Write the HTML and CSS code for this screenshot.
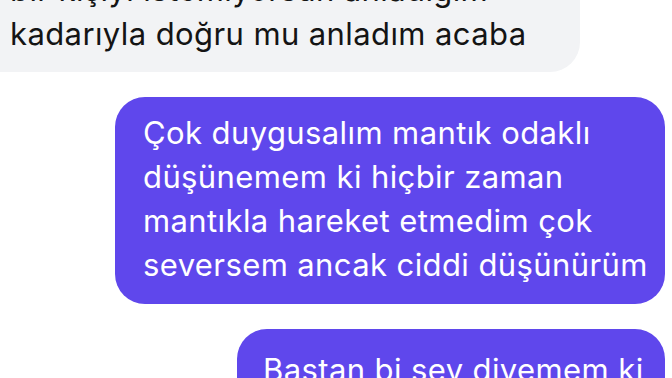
FILE: index.html
```html
<!DOCTYPE html>
<html lang="tr">
<head>
    <meta charset="UTF-8">
    <meta name="viewport" content="width=device-width, initial-scale=1.0">
    <title>Mesajlar</title>
    <link rel="stylesheet" href="styles.css">
</head>
<body>
    <div class="chat">
        <div class="bubble incoming">
            bir kişiyi istemiyorsun anladığım<br>
            kadarıyla doğru mu anladım acaba
        </div>
        <div class="bubble outgoing first">
            Çok duygusalım mantık odaklı<br>
            düşünemem ki hiçbir zaman<br>
            mantıkla hareket etmedim çok<br>
            seversem ancak ciddi düşünürüm
        </div>
        <div class="bubble outgoing second">
            Bastan bi sey diyemem ki<br>
            ilk önce tanımam lazım
        </div>
    </div>
</body>
</html>
```

FILE: styles.css
```css
body {
    margin: 0;
    background-color: #ffffff;
    font-family: Inter, Roboto, sans-serif;
    overflow: hidden;
}

.chat {
    display: flex;
    flex-direction: column;
    gap: 25px;
    margin-top: -32px;
    padding-right: 7px;
}

.bubble {
    box-sizing: border-box;
    font-size: 31px;
    letter-spacing: 0.4px;
    line-height: 44px;
    white-space: nowrap;
}

.incoming {
    align-self: flex-start;
    width: 580px;
    padding: 0 14px 16px 10px;
    background-color: #f2f3f5;
    color: #141414;
    border-radius: 0 0 30px 0;
}

.outgoing {
    align-self: flex-end;
    padding: 14px 20px 17px 28px;
    background-color: #5f47ec;
    color: #ffffff;
    border-radius: 30px;
}

.first {
    width: 550px;
}

.second {
    width: 428px;
    padding-top: 19px;
    padding-left: 26px;
}
```
